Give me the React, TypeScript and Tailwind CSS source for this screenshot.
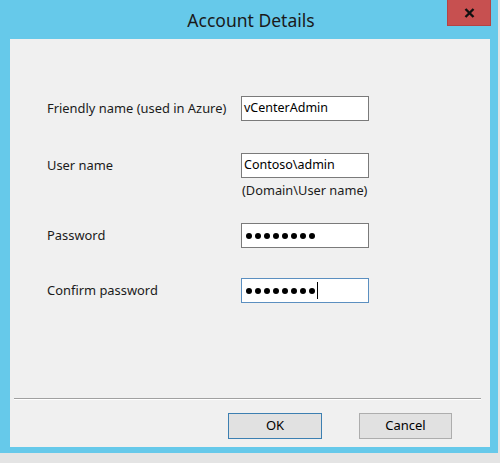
import React from 'react';

const FONT = { fontFamily: '"Segoe UI", "Noto Sans", "Liberation Sans", sans-serif' };

function Dots({ count, caret }: { count: number; caret?: boolean }) {
  return (
    <div className="flex items-center h-full pl-[4px] gap-[3px]">
      {Array.from({ length: count }).map((_, i) => (
        <span key={i} className="block w-[6px] h-[6px] rounded-full bg-black" />
      ))}
      {caret && <span className="block w-[1px] h-[17px] bg-black ml-[-1px]" />}
    </div>
  );
}

function Field({
  label,
  children,
  focused,
}: {
  label: string;
  children: React.ReactNode;
  focused?: boolean;
}) {
  return (
    <div className="flex items-center">
      <span className="w-[194px] shrink-0 text-[12.9px] text-[#1b1b1b]">{label}</span>
      <div
        className={`w-[128px] h-[25px] bg-white border ${
          focused ? 'border-[#5b8fc0]' : 'border-[#7a7a7a]'
        }`}
      >
        {children}
      </div>
    </div>
  );
}

export default function App() {
  return (
    <div className="w-[500px] h-[463px] bg-[#e4e4e4] overflow-hidden" style={FONT}>
      <div className="w-[498px] h-[453px] bg-[#66c9ea] flex flex-col pl-[10px] pr-[8px] pb-[6px]">
        <div className="relative h-[39px] shrink-0 flex items-center justify-center pl-[2px]">
          <span className="text-[17.5px] text-[#1a1a1a] mt-[1px]">Account Details</span>
          <div className="absolute top-0 right-[-1px] w-[44px] h-[26px] bg-[#c75050] border-x border-b border-[#b54343] flex items-center justify-center">
            <svg width="11" height="10" viewBox="0 0 11 10">
              <path d="M1.5 1 L9.5 9 M9.5 1 L1.5 9" stroke="#111" strokeWidth="2.4" />
            </svg>
          </div>
        </div>

        <div className="flex-1 bg-[#f0f0f0] flex flex-col pl-[37px]">
          <div className="mt-[57px]">
            <Field label="Friendly name (used in Azure)">
              <div className="h-full flex items-center pl-[2px] text-[12.5px] text-black">vCenterAdmin</div>
            </Field>
          </div>
          <div className="mt-[32px]">
            <Field label="User name">
              <div className="h-full flex items-center pl-[2px] text-[12.5px] text-black">Contoso\admin</div>
            </Field>
            <div className="pl-[195px] mt-[4px] text-[12.8px] leading-[16px] text-[#1b1b1b]">(Domain\User name)</div>
          </div>
          <div className="mt-[25px]">
            <Field label="Password">
              <Dots count={8} />
            </Field>
          </div>
          <div className="mt-[30px]">
            <Field label="Confirm password" focused>
              <Dots count={8} caret />
            </Field>
          </div>

          <div className="mt-auto ml-[-33px] mr-[9px] border-t border-b border-t-[#a0a0a0] border-b-white" />
          <div className="flex justify-end gap-[37px] pr-[38px] mt-[13px] mb-[8px]">
            <button className="w-[94px] h-[26px] bg-[#e1e1e1] border border-[#3c7fb1] text-[13px] text-black">
              OK
            </button>
            <button className="w-[93px] h-[26px] bg-[#e1e1e1] border border-[#adadad] text-[13px] text-black">
              Cancel
            </button>
          </div>
        </div>
      </div>
    </div>
  );
}
